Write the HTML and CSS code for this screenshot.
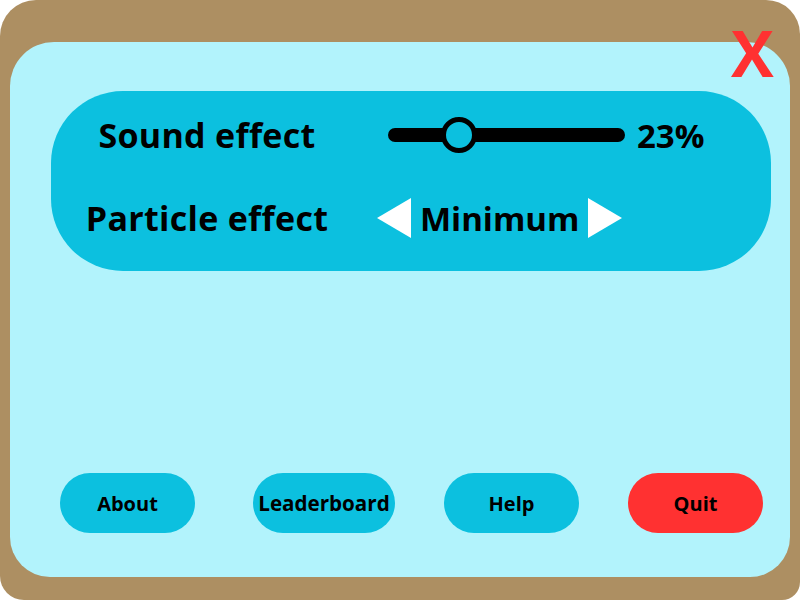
FILE: index.html
```html
<html>
	<head>
		<link rel="stylesheet" href="styles.css">
	</head>
<body>
<div class="frame">
	<div class="close">X</div>
	<div class="panel">
		<div class="card">
			<div class="row">
				<span class="label">Sound effect</span>
				<div class="slider">
					<div class="track"></div>
					<div class="knob" style="left:23%"></div>
				</div>
				<span class="value">23%</span>
			</div>
			<div class="row">
				<span class="label">Particle effect</span>
				<div class="picker">
					<svg class="arrow" width="34" height="40" viewBox="0 0 34 40"><polygon points="34,0 34,40 0,20" fill="#fff"/></svg>
					<span class="value">Minimum</span>
					<svg class="arrow" width="34" height="40" viewBox="0 0 34 40"><polygon points="0,0 0,40 34,20" fill="#fff"/></svg>
				</div>
			</div>
		</div>

		<div class="buttons">
			<div class="btn about">About</div>
			<div class="btn wide">Leaderboard</div>
			<div class="btn">Help</div>
			<div class="btn quit">Quit</div>
		</div>
	</div>
</div>
</body>
</html>
```

FILE: styles.css
```css
body{
	margin: 0;
	background: #fff;
	font-family: "Open Sans", "Noto Sans", sans-serif;
	font-weight: 700;
	color: #000;
}

.frame{
	position: relative;
	width: 800px;
	height: 600px;
	box-sizing: border-box;
	padding: 42px 10px 23px 10px;
	background: #ad8f62;
	border-radius: 36px 34px 18px 24px;
}

.close{
	position: absolute;
	left: 731px;
	top: 15px;
	font-size: 64px;
	line-height: 1.2;
	color: #ff3131;
}

.panel{
	height: 100%;
	background: #b2f3fc;
	border-radius: 44px 44px 40px 40px;
	display: flex;
	flex-direction: column;
	padding-top: 49px;
	box-sizing: border-box;
}

.card{
	margin: 0 19px 0 41px;
	height: 180px;
	box-sizing: border-box;
	padding-top: 14px;
	background: #0cc0df;
	border-radius: 72px;
	display: flex;
	flex-direction: column;
	gap: 23px;
}

.row{
	height: 60px;
	display: flex;
	align-items: center;
}

.label{
	width: 312px;
	text-align: center;
	font-size: 34px;
	letter-spacing: 0.3px;
}

.value{
	font-size: 33px;
}

.slider{
	position: relative;
	width: 237px;
	height: 40px;
	margin-left: 25px;
	margin-right: 12px;
}

.track{
	position: absolute;
	left: 0;
	right: 0;
	top: 13px;
	height: 14px;
	border-radius: 7px;
	background: #000;
}

.knob{
	position: absolute;
	top: 2px;
	width: 26px;
	height: 26px;
	margin-left: -2px;
	border: 5px solid #000;
	border-radius: 50%;
	background: #0cc0df;
}

.picker{
	display: flex;
	align-items: center;
	margin-left: 14px;
	gap: 9px;
}

.buttons{
	margin-top: auto;
	margin-bottom: 44px;
	padding-left: 50px;
	display: flex;
	gap: 49px;
}

.btn{
	width: 135px;
	height: 60px;
	border-radius: 30px;
	background: #0cc0df;
	font-size: 20px;
	display: flex;
	align-items: center;
	justify-content: center;
}

.about{
	margin-right: 9px;
}

.wide{
	width: 142px;
	font-size: 20.6px;
}

.quit{
	background: #ff3131;
}
```
